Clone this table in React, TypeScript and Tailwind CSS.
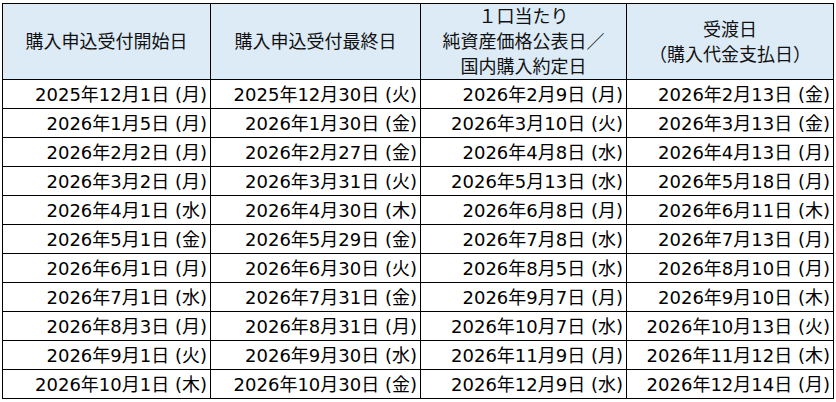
import React from "react";

const rows: [string, string, string, string][] = [
  ["2025年12月1日 (月)", "2025年12月30日 (火)", "2026年2月9日 (月)", "2026年2月13日 (金)"],
  ["2026年1月5日 (月)", "2026年1月30日 (金)", "2026年3月10日 (火)", "2026年3月13日 (金)"],
  ["2026年2月2日 (月)", "2026年2月27日 (金)", "2026年4月8日 (水)", "2026年4月13日 (月)"],
  ["2026年3月2日 (月)", "2026年3月31日 (火)", "2026年5月13日 (水)", "2026年5月18日 (月)"],
  ["2026年4月1日 (水)", "2026年4月30日 (木)", "2026年6月8日 (月)", "2026年6月11日 (木)"],
  ["2026年5月1日 (金)", "2026年5月29日 (金)", "2026年7月8日 (水)", "2026年7月13日 (月)"],
  ["2026年6月1日 (月)", "2026年6月30日 (火)", "2026年8月5日 (水)", "2026年8月10日 (月)"],
  ["2026年7月1日 (水)", "2026年7月31日 (金)", "2026年9月7日 (月)", "2026年9月10日 (木)"],
  ["2026年8月3日 (月)", "2026年8月31日 (月)", "2026年10月7日 (水)", "2026年10月13日 (火)"],
  ["2026年9月1日 (火)", "2026年9月30日 (水)", "2026年11月9日 (月)", "2026年11月12日 (木)"],
  ["2026年10月1日 (木)", "2026年10月30日 (金)", "2026年12月9日 (水)", "2026年12月14日 (月)"],
];

const headers: string[][] = [
  ["購入申込受付開始日"],
  ["購入申込受付最終日"],
  ["１口当たり", "純資産価格公表日／", "国内購入約定日"],
  ["受渡日", "（購入代金支払日）"],
];

export default function App() {
  return (
    <div
      className="w-[836px] h-[402px] bg-white pl-[2px] pt-[3px]"
      style={{ fontFamily: '"DejaVu Sans", "Noto Sans CJK JP", sans-serif' }}
    >
      <div className="grid grid-cols-[207px_209px_205px_206px] grid-rows-[75px_repeat(11,28px)] gap-px bg-black p-px w-[832px]">
        {headers.map((h, i) => (
          <div
            key={i}
            className="bg-[#ddebf7] flex flex-col items-center justify-center text-[18px] leading-[25px] text-[#111]"
          >
            {h.map((l, j) => (
              <span key={j}>{l}</span>
            ))}
          </div>
        ))}
        {rows.map((r, i) =>
          r.map((c, j) => (
            <div
              key={`${i}-${j}`}
              className="bg-white flex items-center justify-end pr-[3px] pt-[2px] text-[18px] leading-[26px] text-black whitespace-nowrap"
            >
              {c}
            </div>
          ))
        )}
      </div>
    </div>
  );
}
